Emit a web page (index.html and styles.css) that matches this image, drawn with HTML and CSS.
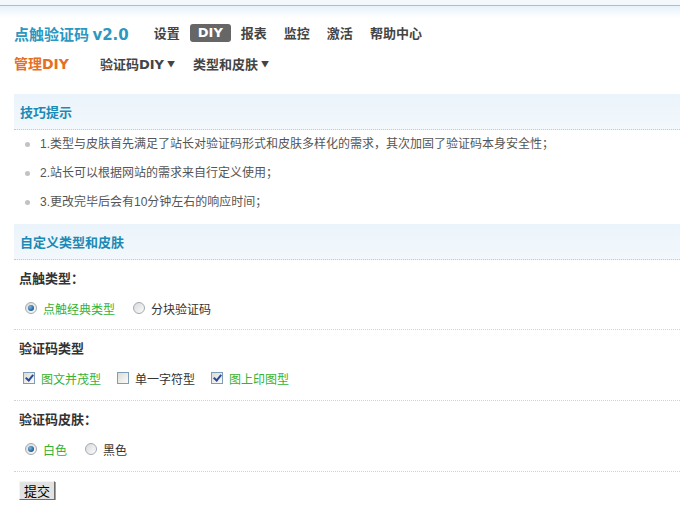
FILE: index.html
```html
<!DOCTYPE html>
<html lang="zh-CN">
<head>
    <meta charset="UTF-8">
    <title>点触验证码 - 管理DIY</title>
    <link rel="stylesheet" href="styles.css">
</head>
<body>
    <div class="topbar"></div>

    <!-- Header -->
    <div class="header">
        <div class="head-row">
            <span class="logo">点触验证码 <b class="ver">v2.0</b></span>
            <ul class="nav">
                <li>设置</li>
                <li class="active">DIY</li>
                <li>报表</li>
                <li>监控</li>
                <li>激活</li>
                <li>帮助中心</li>
            </ul>
        </div>
        <div class="head-row sub-row">
            <span class="sub-title">管理<b class="latin">DIY</b></span>
            <ul class="sub-nav">
                <li>验证码<span class="latin">DIY</span> <span class="arrow">&#9660;</span></li>
                <li>类型和皮肤 <span class="arrow">&#9660;</span></li>
            </ul>
        </div>
    </div>

    <div class="main">
        <!-- Tips -->
        <div class="box-title">技巧提示</div>
        <ul class="tips">
            <li>1.类型与皮肤首先满足了站长对验证码形式和皮肤多样化的需求，其次加固了验证码本身安全性；</li>
            <li>2.站长可以根据网站的需求来自行定义使用；</li>
            <li>3.更改完毕后会有10分钟左右的响应时间；</li>
        </ul>

        <!-- Custom type and skin -->
        <div class="box-title">自定义类型和皮肤</div>
        <form class="diy-form">
            <div class="field">
                <h4>点触类型：</h4>
                <div class="options">
                    <label class="opt on"><input type="radio" name="type" checked> 点触经典类型</label>
                    <label class="opt"><input type="radio" name="type"> 分块验证码</label>
                </div>
            </div>
            <div class="field">
                <h4>验证码类型</h4>
                <div class="options">
                    <label class="opt on"><input type="checkbox" checked> 图文并茂型</label>
                    <label class="opt"><input type="checkbox"> 单一字符型</label>
                    <label class="opt on"><input type="checkbox" checked> 图上印图型</label>
                </div>
            </div>
            <div class="field">
                <h4>验证码皮肤：</h4>
                <div class="options">
                    <label class="opt on"><input type="radio" name="skin" checked> 白色</label>
                    <label class="opt"><input type="radio" name="skin"> 黑色</label>
                </div>
            </div>
            <button type="button" class="submit">提交</button>
        </form>
    </div>
</body>
</html>
```

FILE: styles.css
```css
body {
    margin: 0;
    padding: 0;
    background-color: white;
    font-family: "Noto Sans CJK SC", sans-serif;
    font-size: 12px;
    color: #333;
}

ul {
    list-style: none;
    margin: 0;
    padding: 0;
}

.latin,
.ver {
    font-family: "DejaVu Sans", "Noto Sans CJK SC", sans-serif;
}

.topbar {
    height: 5px;
    background-color: #f2f8fb;
    border-bottom: 1px solid #b3bec2;
}

.header {
    padding: 18px 14px 22px;
    background: linear-gradient(#e6f2f9, white 12px);
}

.head-row {
    display: flex;
    align-items: center;
    height: 18px;
}

.sub-row {
    margin-top: 12px;
}

.logo {
    font-size: 15px;
    font-weight: bold;
    color: #2b98c2;
    margin-right: 17px;
}

.nav {
    display: flex;
}

.nav li {
    font-size: 13px;
    font-weight: bold;
    color: #444;
    line-height: 18px;
    padding: 0 8px;
    margin-right: 1px;
}

.nav li.active {
    font-family: "DejaVu Sans", sans-serif;
    background-color: #666;
    color: white;
    border-radius: 3px;
    padding: 0 8px;
    margin: 0 2px 0 1px;
}

.sub-title {
    font-size: 14px;
    font-weight: bold;
    color: #e4711f;
    margin-right: 31px;
}

.sub-nav {
    display: flex;
    gap: 18px;
}

.sub-nav li {
    font-size: 13px;
    font-weight: bold;
    color: #444;
}

.sub-nav .arrow {
    font-size: 8px;
    vertical-align: 2px;
}

.main {
    padding-left: 14px;
}

.box-title {
    height: 35px;
    line-height: 35px;
    padding-left: 6px;
    background: linear-gradient(#ebf4fb, #f2f8fc);
    border-bottom: 1px dotted #c4c9cc;
    font-size: 13px;
    font-weight: bold;
    color: #1a8ab6;
}

.tips {
    margin-bottom: 7px;
}

.tips li {
    line-height: 29px;
    padding-left: 26px;
    position: relative;
    color: #555;
    font-family: "Liberation Sans", "Noto Sans CJK SC", sans-serif;
}

.tips li::before {
    content: "";
    position: absolute;
    left: 11px;
    top: 12px;
    width: 5px;
    height: 5px;
    border-radius: 50%;
    background-color: #c2c2c2;
}

.field {
    padding: 0 0 9px 5px;
    border-bottom: 1px dotted #cfd3d5;
}

.field + .field {
    padding-bottom: 10px;
}

.field h4 {
    margin: 0;
    line-height: 36px;
    font-size: 13px;
    color: #333;
}

.options {
    display: flex;
    align-items: center;
    gap: 16px;
    height: 24px;
    padding-left: 4px;
}

.opt {
    display: flex;
    align-items: center;
    gap: 6px;
    color: #333;
}

.opt.on {
    color: #33b233;
}

.opt input {
    appearance: none;
    margin: 0;
    position: relative;
}

.opt input[type="radio"] {
    width: 12px;
    height: 12px;
    margin-left: 2px;
    border: 1px solid #a3abb0;
    border-radius: 50%;
    background: linear-gradient(135deg, #d8dadc, #fbfbfb);
    box-sizing: border-box;
}

.opt input[type="radio"]:checked::after {
    content: "";
    position: absolute;
    left: 2px;
    top: 2px;
    width: 6px;
    height: 6px;
    border-radius: 50%;
    background: radial-gradient(circle at 35% 35%, #7fb6de, #1f5d8f 70%);
}

.opt input[type="checkbox"] {
    width: 12px;
    height: 12px;
    border: 1px solid #7f9db9;
    background: linear-gradient(135deg, #dcdcd6, #fafafa);
    box-sizing: border-box;
}

.opt input[type="checkbox"]:checked::after {
    content: "";
    position: absolute;
    left: 3px;
    top: 0px;
    width: 3px;
    height: 6px;
    border: solid #2a4a9a;
    border-width: 0 2px 2px 0;
    transform: rotate(40deg);
}

.submit {
    margin: 9px 0 0 5px;
    width: 36px;
    height: 19px;
    padding: 0;
    font-family: "Noto Sans CJK SC", sans-serif;
    font-size: 13px;
    line-height: 15px;
    color: black;
    background-color: #e2e2e2;
    border: 1px solid;
    border-color: #f4f4f4 #6b6b6b #6b6b6b #f4f4f4;
    box-shadow: 1px 1px 0 #a0a0a0;
}
```
